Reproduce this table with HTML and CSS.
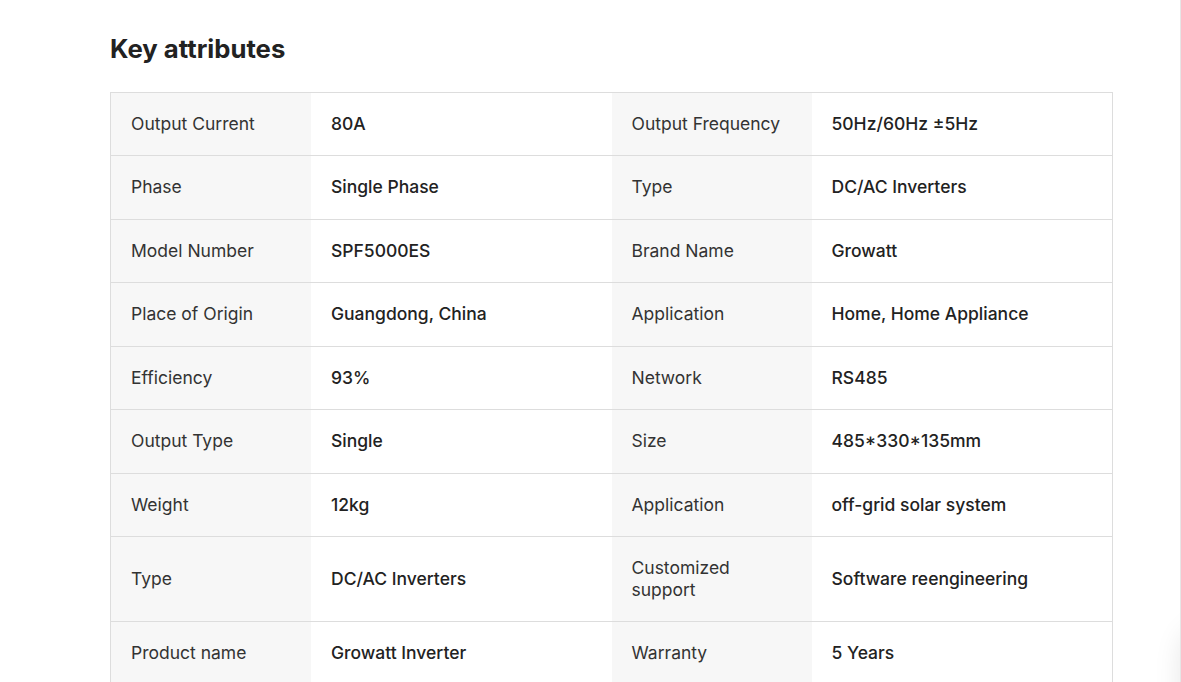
FILE: index.html
```html
<!DOCTYPE html>
<html>
<head>
<meta charset="utf-8">
<link rel="stylesheet" href="styles.css">
</head>
<body>
<div class="page">
  <section class="attrs">
    <h2 class="title">Key attributes</h2>
    <div class="table">
      <div class="row"><div class="k">Output Current</div><div class="v">80A</div><div class="k">Output Frequency</div><div class="v">50Hz/60Hz ±5Hz</div></div>
      <div class="row"><div class="k">Phase</div><div class="v">Single Phase</div><div class="k">Type</div><div class="v">DC/AC Inverters</div></div>
      <div class="row"><div class="k">Model Number</div><div class="v">SPF5000ES</div><div class="k">Brand Name</div><div class="v">Growatt</div></div>
      <div class="row"><div class="k">Place of Origin</div><div class="v">Guangdong, China</div><div class="k">Application</div><div class="v">Home, Home Appliance</div></div>
      <div class="row"><div class="k">Efficiency</div><div class="v">93%</div><div class="k">Network</div><div class="v">RS485</div></div>
      <div class="row"><div class="k">Output Type</div><div class="v">Single</div><div class="k">Size</div><div class="v">485*330*135mm</div></div>
      <div class="row"><div class="k">Weight</div><div class="v">12kg</div><div class="k">Application</div><div class="v">off-grid solar system</div></div>
      <div class="row"><div class="k">Type</div><div class="v">DC/AC Inverters</div><div class="k">Customized<br>support</div><div class="v">Software reengineering</div></div>
      <div class="row"><div class="k">Product name</div><div class="v">Growatt Inverter</div><div class="k">Warranty</div><div class="v">5 Years</div></div>
    </div>
  </section>
  <div class="shadow"></div>
  <div class="edge"></div>
</div>
</body>
</html>
```

FILE: styles.css
```css
html, body {
  margin: 0;
  padding: 0;
  background: #fff;
}
body {
  font-family: Inter, "Noto Sans", sans-serif;
  color: #222;
}
.page {
  position: relative;
  width: 1181px;
  height: 682px;
  overflow: hidden;
}
.attrs {
  padding: 33px 0 0 110px;
}
.title {
  margin: 0 0 26.6px 0;
  font-size: 25.7px;
  line-height: 32px;
  font-weight: 700;
  color: #222;
}
.table {
  width: 1001px;
  border: 1px solid #ddd;
  border-bottom: none;
}
.row {
  display: grid;
  grid-template-columns: 200px 1fr 200px 1fr;
  border-bottom: 1px solid #ddd;
}
.k, .v {
  padding: 20px 20px 21px;
  font-size: 17.5px;
  line-height: 21.5px;
  display: flex;
  align-items: center;
}
.k {
  background: #f7f7f7;
  color: #333;
  font-weight: 400;
}
.v {
  background: #fff;
  color: #222;
  font-weight: 500;
}
.edge {
  position: absolute;
  top: 0;
  right: 0;
  width: 1px;
  height: 682px;
  background: #e6e6e6;
}
.shadow {
  position: absolute;
  left: 1181px;
  top: 625px;
  width: 60px;
  height: 200px;
  border-radius: 40px;
  background: #fff;
  box-shadow: 0 0 28px rgba(0,0,0,0.10);
}
```
